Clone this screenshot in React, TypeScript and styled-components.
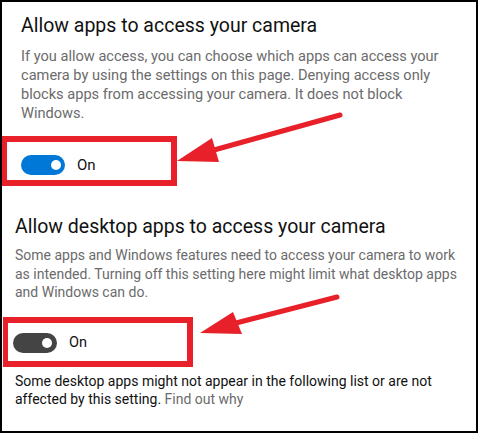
import React from "react";
import styled, { createGlobalStyle } from "styled-components";

const GlobalStyle = createGlobalStyle`
  html, body {
    margin: 0;
    padding: 0;
    background: #fff;
  }
  body {
    font-family: Roboto, "Open Sans", sans-serif;
  }
`;

const RED = "#e8202a";

const Frame = styled.div`
  position: relative;
  box-sizing: border-box;
  width: 478px;
  height: 433px;
  border: 2px solid #000;
  overflow: hidden;
  background: #fff;
`;

const Section = styled.section`
  display: flex;
  flex-direction: column;
  align-items: flex-start;
`;

const Title = styled.h2<{ $indent: number; $top: number }>`
  margin: ${(p) => p.$top}px 0 0 ${(p) => p.$indent}px;
  font-size: 19.5px;
  line-height: 26px;
  font-weight: 400;
  color: #111;
  white-space: nowrap;
`;

const Description = styled.p<{
  $indent: number;
  $top: number;
  $size: number;
  $lh: number;
}>`
  margin: ${(p) => p.$top}px 0 0 ${(p) => p.$indent}px;
  font-size: ${(p) => p.$size}px;
  line-height: ${(p) => p.$lh}px;
  color: #6b6b6b;
  white-space: nowrap;
`;

const Note = styled.p`
  margin: 5px 0 0 13px;
  font-size: 14px;
  line-height: 18px;
  color: #111;
  white-space: nowrap;
`;

const Link = styled.span`
  color: #6b6b6b;
`;

const Highlight = styled.div<{
  $width: number;
  $top: number;
  $left: number;
  $padTop: number;
  $padLeft: number;
}>`
  box-sizing: border-box;
  width: ${(p) => p.$width}px;
  height: 50px;
  margin: ${(p) => p.$top}px 0 0 ${(p) => p.$left}px;
  padding: ${(p) => p.$padTop}px 0 0 ${(p) => p.$padLeft}px;
  border: 6px solid ${RED};
  border-left-width: 5px;
  display: flex;
  align-items: flex-start;
  gap: 12px;
`;

const Toggle = styled.span<{ $color: string; $knobGap: number }>`
  position: relative;
  display: block;
  width: 44px;
  height: 20px;
  border-radius: 10px;
  background: ${(p) => p.$color};
  flex-shrink: 0;

  &::after {
    content: "";
    position: absolute;
    top: 5px;
    right: ${(p) => p.$knobGap}px;
    width: 10px;
    height: 10px;
    border-radius: 50%;
    background: #fff;
  }
`;

const ToggleLabel = styled.span<{ $size: number }>`
  font-size: ${(p) => p.$size}px;
  line-height: 20px;
  color: #111;
`;

const Arrows = styled.svg`
  position: absolute;
  top: -2px;
  left: -2px;
  width: 478px;
  height: 433px;
  pointer-events: none;
`;

const Arrow: React.FC<{
  from: [number, number];
  base: [number, number];
  head: string;
}> = ({ from, base, head }) => (
  <g>
    <line
      x1={from[0]}
      y1={from[1]}
      x2={base[0]}
      y2={base[1]}
      stroke={RED}
      strokeWidth={5}
      strokeLinecap="round"
    />
    <polygon points={head} fill={RED} />
  </g>
);

export default function App() {
  return (
    <>
      <GlobalStyle />
      <Frame>
        <Section>
          <Title $indent={19} $top={11}>
            Allow apps to access your camera
          </Title>
          <Description $indent={19} $top={8} $size={14.6} $lh={19}>
            If you allow access, you can choose which apps can access your
            <br />
            camera by using the settings on this page. Denying access only
            <br />
            blocks apps from accessing your camera. It does not block
            <br />
            Windows.
          </Description>
          <Highlight $width={175} $top={13} $left={0} $padTop={13} $padLeft={14}>
            <Toggle $color="#0078d7" $knobGap={4} />
            <ToggleLabel $size={15}>On</ToggleLabel>
          </Highlight>
        </Section>

        <Section>
          <Title $indent={13} $top={28}>
            Allow desktop apps to access your camera
          </Title>
          <Description $indent={13} $top={6} $size={14} $lh={18.5}>
            Some apps and Windows features need to access your camera to work
            <br />
            as intended. Turning off this setting here might limit what desktop apps
            <br />
            and Windows can do.
          </Description>
          <Highlight $width={190} $top={15} $left={1} $padTop={10} $padLeft={5}>
            <Toggle $color="#444444" $knobGap={5} />
            <ToggleLabel $size={14.5}>On</ToggleLabel>
          </Highlight>
          <Note>
            Some desktop apps might not appear in the following list or are not
            <br />
            affected by this setting. <Link>Find out why</Link>
          </Note>
        </Section>

        <Arrows viewBox="0 0 478 433">
          <Arrow
            from={[340, 115]}
            base={[214, 150]}
            head="177,161 212,138 219,162"
          />
          <Arrow
            from={[337, 297]}
            base={[236, 323]}
            head="200,333 233,312 242,334"
          />
        </Arrows>
      </Frame>
    </>
  );
}
